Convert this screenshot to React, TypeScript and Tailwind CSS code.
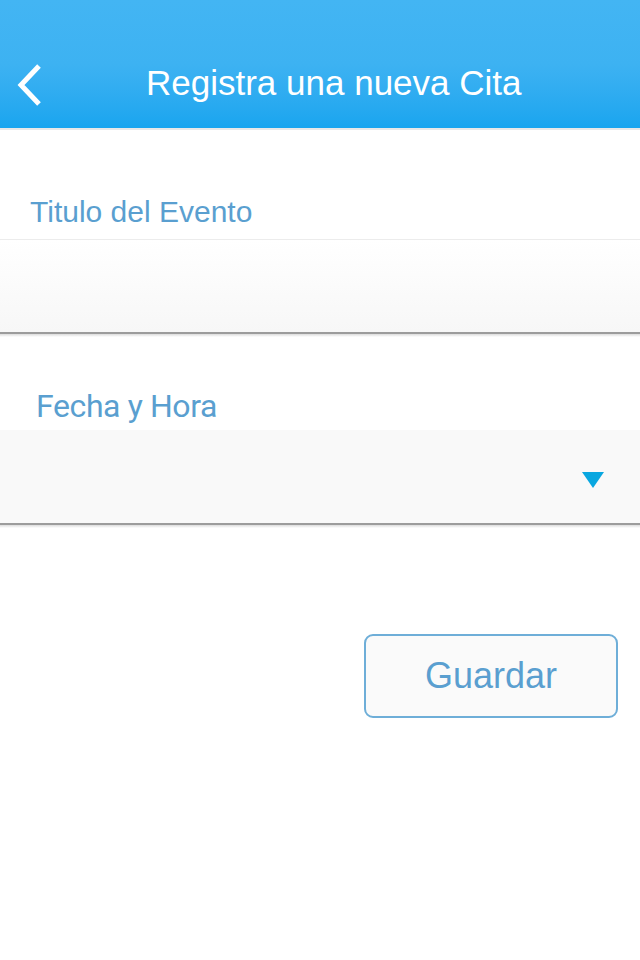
import React from 'react';

const App: React.FC = () => {
  return (
    <div className="w-[640px] h-[960px] bg-white flex flex-col" style={{ fontFamily: '"Liberation Sans", Arial, sans-serif' }}>
      {/* Header */}
      <div className="h-[128px] bg-gradient-to-b from-[#43b5f3] via-[#3db2f2] to-[#18a5ef] flex items-end pb-[20px]">
        <div className="w-[64px] flex justify-center">
          <svg width="30" height="44" viewBox="0 0 30 44" className="ml-[-4px] mb-[1px]">
            <path d="M24 3 L6 22 L24 41" fill="none" stroke="#ffffff" strokeWidth="5" strokeLinecap="butt" strokeLinejoin="miter" />
          </svg>
        </div>
        <h1 className="flex-1 text-white text-[35px] leading-none pl-[82px] pb-[8px]">Registra una nueva Cita</h1>
      </div>
      <div className="h-[2px] bg-[#e8e8e8]" />

      {/* Titulo */}
      <div className="pt-[67px] pl-[30px] pb-[12px] text-[30px] leading-none text-[#5a9fd0]">Titulo del Evento</div>
      <div className="h-px bg-[#ececec]" />
      <div className="h-[92px] bg-gradient-to-b from-white to-[#f7f7f7]" />
      <div className="h-[2px] bg-[#9c9c9c]" />
      <div className="h-[3px] bg-gradient-to-b from-[#dcdcdc] to-white" />

      {/* Fecha */}
      <div className="pt-[53px] pl-[36px] pb-[8px] text-[32px] leading-none text-[#5a9fd0] tracking-[-0.4px]" style={{ fontFamily: 'Roboto, "Liberation Sans", sans-serif' }}>Fecha y Hora</div>
      <div className="h-[93px] bg-[#f9f9f9] flex items-center justify-end pr-[36px] pt-[6px]">
        <svg width="22" height="16" viewBox="0 0 22 16">
          <path d="M0 0 L22 0 L11 16 Z" fill="#09a7e0" />
        </svg>
      </div>
      <div className="h-[2px] bg-[#9c9c9c]" />
      <div className="h-[3px] bg-gradient-to-b from-[#dcdcdc] to-white" />

      {/* Button */}
      <div className="flex justify-end pr-[22px] pt-[106px]">
        <button className="w-[254px] h-[84px] border-2 border-[#6eaed8] rounded-[9px] bg-[#fafafa] text-[#5a9fd0] text-[36px] flex items-center justify-center">
          Guardar
        </button>
      </div>
    </div>
  );
};

export default App;
